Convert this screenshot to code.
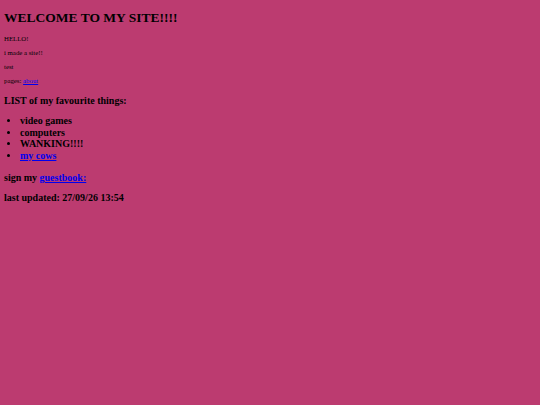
import React from 'react';

export default function App() {
  return (
    <div className="min-h-[405px] bg-[#bc3b70] px-[4px] pt-[2px] text-black [font-family:'Liberation_Serif',serif]">
      <h1 className="mt-[8px] mb-[9px] text-[13.5px] font-bold leading-[16px]">WELCOME TO MY SITE!!!!</h1>
      <p className="my-[6.5px] text-[6.8px] leading-[7.5px]">HELLO!</p>
      <p className="my-[6.5px] text-[6.8px] leading-[7.5px]">i made a site!!</p>
      <p className="my-[6.5px] text-[6.8px] leading-[7.5px]">test</p>
      <p className="mt-[6.5px] mb-[10.5px] text-[6.8px] leading-[7.5px]">
        pages: <a href="#" className="text-[#0000ee] underline">about</a>
      </p>
      <h3 className="mb-[8.5px] text-[10px] font-bold leading-[11.5px]">LIST of my favourite things:</h3>
      <ul className="mb-[11px] list-disc pl-[16px] text-[10px] font-bold leading-[11.5px]">
        <li>video games</li>
        <li>computers</li>
        <li>WANKING!!!!</li>
        <li>
          <a href="#" className="text-[#0000ee] underline">my cows</a>
        </li>
      </ul>
      <h3 className="mb-[8.5px] text-[10px] font-bold leading-[11.5px]">
        sign my <a href="#" className="text-[#0000ee] underline">guestbook:</a>
      </h3>
      <h3 className="text-[10px] font-bold leading-[11.5px]">last updated: 27/09/26 13:54</h3>
    </div>
  );
}
